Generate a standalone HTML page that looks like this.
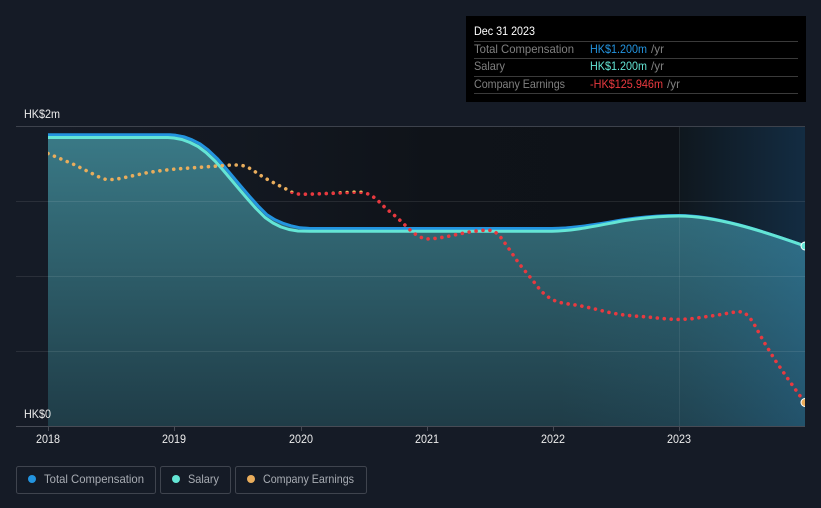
<!DOCTYPE html>
<html>
<head>
<meta charset="utf-8">
<style>
html,body{margin:0;padding:0;background:#151b26;width:821px;height:508px;overflow:hidden}
svg{display:block;font-family:"Liberation Sans",sans-serif}
</style>
</head>
<body>
<svg width="821" height="508" viewBox="0 0 821 508" xmlns="http://www.w3.org/2000/svg">
<defs>
<linearGradient id="bgH" x1="48" x2="679" y1="0" y2="0" gradientUnits="userSpaceOnUse">
<stop offset="0" stop-color="#151b26"/><stop offset="0.3" stop-color="#131821"/><stop offset="0.6" stop-color="#0f1319"/><stop offset="1" stop-color="#0e1218"/>
</linearGradient>
<linearGradient id="fc" x1="679" x2="805" y1="0" y2="0" gradientUnits="userSpaceOnUse">
<stop offset="0" stop-color="#0f171e"/><stop offset="1" stop-color="#132c42"/>
</linearGradient>
<linearGradient id="area" x1="0" x2="0" y1="133" y2="426" gradientUnits="userSpaceOnUse">
<stop offset="0" stop-color="#3a7a87"/><stop offset="1" stop-color="#1f3c47"/>
</linearGradient>
<linearGradient id="areaR" x1="560" x2="805" y1="0" y2="0" gradientUnits="userSpaceOnUse">
<stop offset="0" stop-color="#2a7ea8" stop-opacity="0"/><stop offset="0.5" stop-color="#2a7ea8" stop-opacity="0.1"/><stop offset="1" stop-color="#2a86c0" stop-opacity="0.3"/>
</linearGradient>
<linearGradient id="earn" x1="0" x2="0" y1="126" y2="426" gradientUnits="userSpaceOnUse">
<stop offset="0.22" stop-color="#e9ad5c"/><stop offset="0.22" stop-color="#e8393f"/>
</linearGradient>
<clipPath id="c"><rect x="48" y="126" width="757" height="301"/></clipPath>
</defs>

<rect x="48" y="127" width="631" height="299" fill="url(#bgH)"/>
<rect x="679" y="127" width="126" height="299" fill="url(#fc)"/>

<g clip-path="url(#c)">
<path d="M48 133.5H170L176 134L184 135.5L192 138.5L200 142.5L208 148.5L217 157L225 166L233 175.5L241 185L250 195.5L258 204.5L267 213.5L275 218.5L283 222L291 224.5L300 226.5L310 227H552C575 227 600 222.5 625 218.5C645 215.5 662 214.5 679 214.5C715 214.5 760 229 805 245V426H48Z" fill="url(#area)"/>
<path d="M48 133.5H170L176 134L184 135.5L192 138.5L200 142.5L208 148.5L217 157L225 166L233 175.5L241 185L250 195.5L258 204.5L267 213.5L275 218.5L283 222L291 224.5L300 226.5L310 227H552C575 227 600 222.5 625 218.5C645 215.5 662 214.5 679 214.5C715 214.5 760 229 805 245V426H48Z" fill="url(#areaR)"/>
</g>

<g stroke-width="1" fill="none">
<path d="M16 126.5H805" stroke="#3d424c"/>
<path d="M16 201.5H805" stroke="#ffffff" stroke-opacity="0.09"/>
<path d="M16 276.5H805" stroke="#ffffff" stroke-opacity="0.09"/>
<path d="M16 351.5H805" stroke="#ffffff" stroke-opacity="0.09"/>
<path d="M16 426.5H805" stroke="#474b55"/>
<path d="M679.5 127V426" stroke="#ffffff" stroke-opacity="0.07"/>
<path d="M48.5 427V431M174.5 427V431M301.5 427V431M427.5 427V431M553.5 427V431M679.5 427V431" stroke="#474b55"/>
</g>

<g clip-path="url(#c)" fill="none" stroke-linejoin="round">
<path d="M48 134.8H170L176 135.3L184 136.8L192 139.8L200 143.8L208 149.8L217 158.3L225 167.3L233 176.8L241 186.3L250 196.8L258 205.8L267 214.8L275 219.8L283 223.3L291 225.8L300 227.8L310 228.5H552C575 228.5 600 223.5 625 219.5C645 216.5 662 215.5 679 215.5C715 215.5 760 230 805 246" stroke="#2394df" stroke-width="3"/>
<path d="M48 137.5H168L174 138L182 139.5L190 142.5L198 146.5L206 152.5L215 161L223 170L231 179.5L239 189L248 199.5L256 208.5L265 217.5L273 223L281 227L289 229.5L298 231L310 231.2H552C575 231 600 225 625 220.5C645 217.5 662 216 679 216C715 216 760 230 805 246" stroke="#64e5d5" stroke-width="3"/>
<path d="M48 153.5L61 159L74 164.5L87 171L99 177L106 179.5L113 179.5L120 178.5L134 175.5L148 172.5L162 170.5L176 169L190 168L204 167L218 166L231 165L238 165L245 166L251 169L263 177L276 184L288 190L294 193.5L301 194.3L315 194L329 193.5L343 192.7L357 192L364 192.5L370 194.7L376 198.7L386 208.5L397 217.5L407 227L412 231.7L418 236L424 238.7L431 239L445 237L459 234L472 231.5L486 230L493 230.5L499 235L507 246L519 263.5L532 279.5L541 291L546 295.5L552 299.5L558 302L565 303.5L579 305.5L593 308.5L607 312L620 314.5L634 316L648 317L662 318.5L676 319.5L690 319L704 317L718 315L732 312.5L739 311.5L745 313L750 318L754 324L764 342L775 360L787 377.5L799 394.5L805 402.5" stroke="url(#earn)" stroke-width="3.6" stroke-linecap="round" stroke-dasharray="0.01 6.95"/>
<circle cx="805" cy="246" r="4" fill="#64e5d5" stroke="#ffffff" stroke-width="1"/>
<circle cx="805" cy="402.5" r="4" fill="#e9ad5c" stroke="#ffffff" stroke-width="1"/>
</g>

<g font-size="12" fill="#ececec">
<text x="24" y="118" textLength="36" lengthAdjust="spacingAndGlyphs">HK$2m</text>
<text x="24" y="418" textLength="27" lengthAdjust="spacingAndGlyphs">HK$0</text>
<text x="48" y="443" text-anchor="middle" textLength="24" lengthAdjust="spacingAndGlyphs">2018</text>
<text x="174" y="443" text-anchor="middle" textLength="24" lengthAdjust="spacingAndGlyphs">2019</text>
<text x="301" y="443" text-anchor="middle" textLength="24" lengthAdjust="spacingAndGlyphs">2020</text>
<text x="427" y="443" text-anchor="middle" textLength="24" lengthAdjust="spacingAndGlyphs">2021</text>
<text x="553" y="443" text-anchor="middle" textLength="24" lengthAdjust="spacingAndGlyphs">2022</text>
<text x="679" y="443" text-anchor="middle" textLength="24" lengthAdjust="spacingAndGlyphs">2023</text>
</g>

<rect x="466" y="16" width="340" height="86" fill="#000000"/>
<path d="M474 41.5H798M474 58.5H798M474 76.5H798M474 93.5H798" stroke="#3a3a3a" stroke-width="1"/>
<g font-size="12">
<text x="474" y="35" fill="#ffffff" textLength="61" lengthAdjust="spacingAndGlyphs">Dec 31 2023</text>
<text x="474" y="53" fill="#808080" textLength="100" lengthAdjust="spacingAndGlyphs">Total Compensation</text>
<text x="474" y="70" fill="#808080" textLength="31" lengthAdjust="spacingAndGlyphs">Salary</text>
<text x="474" y="88" fill="#808080" textLength="91" lengthAdjust="spacingAndGlyphs">Company Earnings</text>
<text x="590" y="53" fill="#2394df" textLength="57" lengthAdjust="spacingAndGlyphs">HK$1.200m</text>
<text x="651" y="53" fill="#808080" textLength="13" lengthAdjust="spacingAndGlyphs">/yr</text>
<text x="590" y="70" fill="#64e5d5" textLength="57" lengthAdjust="spacingAndGlyphs">HK$1.200m</text>
<text x="651" y="70" fill="#808080" textLength="13" lengthAdjust="spacingAndGlyphs">/yr</text>
<text x="590" y="88" fill="#e8393f" textLength="73" lengthAdjust="spacingAndGlyphs">-HK$125.946m</text>
<text x="667" y="88" fill="#808080" textLength="13" lengthAdjust="spacingAndGlyphs">/yr</text>
</g>

<g fill="none" stroke="#3f444e">
<rect x="16.5" y="466.5" width="139" height="27" rx="2"/>
<rect x="160.5" y="466.5" width="70" height="27" rx="2"/>
<rect x="235.5" y="466.5" width="131" height="27" rx="2"/>
</g>
<circle cx="32" cy="479" r="4" fill="#2394df"/>
<circle cx="176" cy="479" r="4" fill="#64e5d5"/>
<circle cx="251" cy="479" r="4" fill="#e9ad5c"/>
<g font-size="12" fill="#a8acb3">
<text x="44" y="483" textLength="100" lengthAdjust="spacingAndGlyphs">Total Compensation</text>
<text x="188" y="483" textLength="31" lengthAdjust="spacingAndGlyphs">Salary</text>
<text x="263" y="483" textLength="91" lengthAdjust="spacingAndGlyphs">Company Earnings</text>
</g>
</svg>
</body>
</html>
